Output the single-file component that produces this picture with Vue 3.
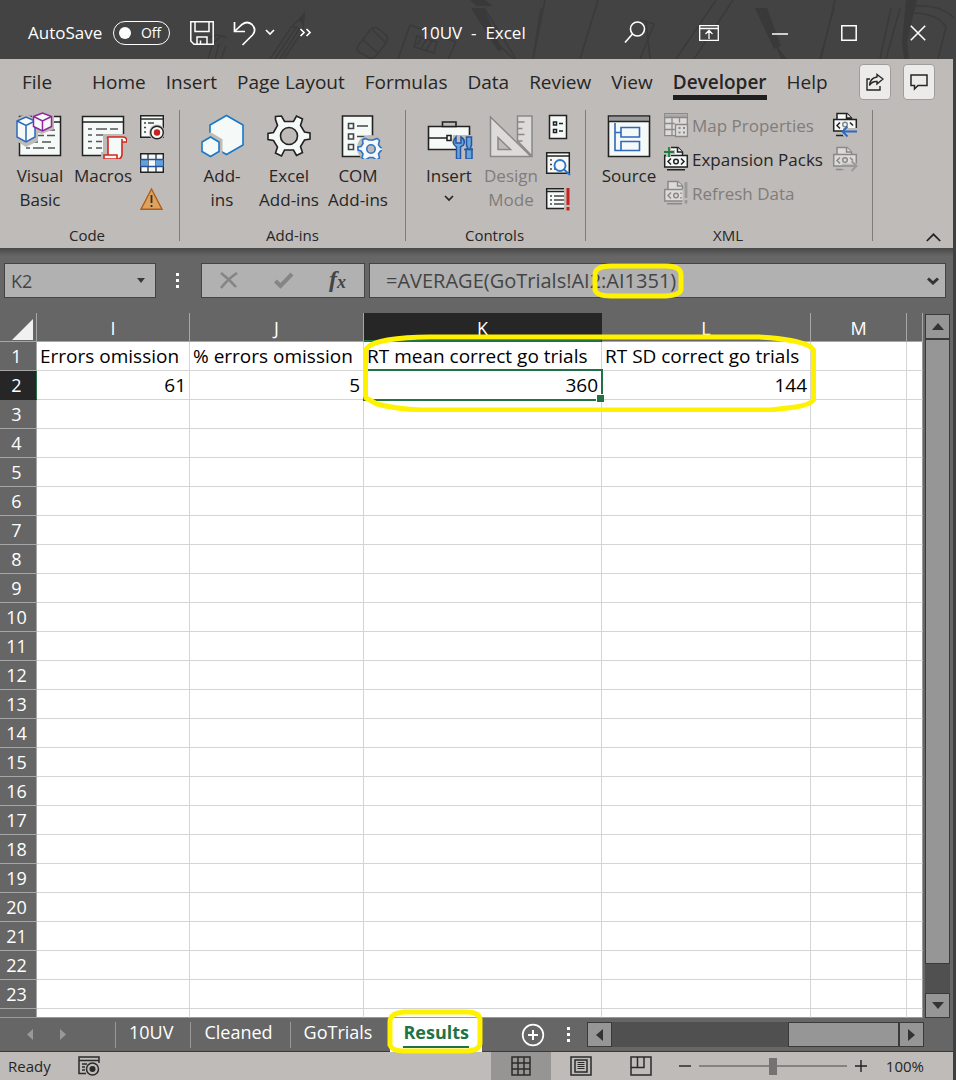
<script setup>
import { ref } from 'vue'

const autoSave = ref(false)
const nameBox = ref('K2')
const formula = ref('=AVERAGE(GoTrials!AI2:AI1351)')
const zoom = ref(50)

const menu = ['File', 'Home', 'Insert', 'Page Layout', 'Formulas', 'Data', 'Review', 'View', 'Developer', 'Help']
const columns = ['I', 'J', 'K', 'L', 'M', '']
const cells = {
  1: ['Errors omission', '% errors omission', 'RT mean correct go trials', 'RT SD correct go trials', '', ''],
  2: ['61', '5', '360', '144', '', ''],
}
const rows = Array.from({ length: 23 }, (_, i) => i + 1)
const sheets = ['10UV', 'Cleaned', 'GoTrials', 'Results']
const cellText = (row, col) => (cells[row] ? cells[row][col] : '')
</script>

<template>
  <div class="window">
    <header class="titlebar">
      <svg class="doodle" width="956" height="59" viewBox="0 0 956 59" fill="none" stroke="#3a3a3a" stroke-width="1.5" aria-hidden="true">
        <path d="M270 59 292 26 304 15 303 30 284 59M275 59l22-33M280 59l20-31M292 26l11 5M208 59l5-16 8-7 6 2M215 59l4-15M221 59l5-13M209 38q8-6 18 0" />
        <path d="M299 20l5-6-1 9z" fill="#3a3a3a" />
        <path d="M358 46l12-16q4-5 10 0l6 5q3 4 0 8l-10 13q-4 4-8 1l-9-5q-3-3-1-6zM363 40l16 14M372 29l14 14M398 59l12-34 46 17-8 17" />
        <path d="M417 36l20 6-3 11-20-6zM417 45l5-8M421 48l6-9M426 50l6-9" />
        <path d="M470 0h15l8 6h-16zM471 8h13l18 42-4 1z" fill="#393939" stroke="none" />
        <path d="M500 46l14 13M484 8l32 51M545 0l-12 59M541 8l-8 51M598 0l-18 59M716 0L676 59M733 0l-39 59M640 20l14 4-14 35M646 20l4 39M835 0l-14 59M891 8l-11 51M900 8l-14 51M911 6q30-2 43 12M912 13q25 0 34 14l-8 32M834 8l-14 51" />
        <path d="M755 8h12l14 38-7 3zM775 44l12 15h-6zM906 0h11l-10 42 2 17h-5l-2-17z" fill="#393939" stroke="none" />
      </svg>
      <label class="autosave">
        <span>AutoSave</span>
        <span class="switch"><input v-model="autoSave" type="checkbox"><span>{{ autoSave ? 'On' : 'Off' }}</span></span>
      </label>
      <button class="tbtn save" aria-label="Save">
        <svg width="24" height="24" viewBox="0 0 24 24" fill="none" stroke="#fff" stroke-width="1.5"><path d="M.8.8h22.4v22.4H4L.8 20zM5 1v9.5h14V1M7 23v-7h10v7M10.500 23v-3.500" /></svg>
      </button>
      <button class="tbtn undo" aria-label="Undo">
        <svg width="24" height="26" viewBox="0 0 24 26" fill="none" stroke="#fff" stroke-width="1.7"><path d="M1.500 2v9.500H12M2 11 9 4.500q5-4 10 0 5 5 .5 10.500L9.500 25" /></svg>
      </button>
      <button class="tbtn caret" aria-label="Undo history">
        <svg width="10" height="7" viewBox="0 0 10 7" fill="none" stroke="#fff" stroke-width="1.600"><path d="M1 1l4 4 4-4" /></svg>
      </button>
      <button class="tbtn more" aria-label="More commands">
        <svg width="13" height="9" viewBox="0 0 13 9" fill="none" stroke="#fff" stroke-width="1.700"><path d="M1.500 1 5 4.500 1.500 8M7.500 1 11 4.500 7.500 8" /></svg>
      </button>
      <h1 class="title">10UV&nbsp; -&nbsp; Excel</h1>
      <div class="wincontrols">
        <button class="tbtn" aria-label="Search">
          <svg width="22" height="24" viewBox="0 0 22 24" fill="none" stroke="#fff" stroke-width="1.600"><circle cx="13.500" cy="8" r="7" /><path d="M8.500 13 1 21.500" /></svg>
        </button>
        <button class="tbtn" aria-label="Ribbon display options">
          <svg width="20" height="16" viewBox="0 0 20 16" fill="none" stroke="#fff" stroke-width="1.300"><path d="M.7.7h18.600v14.600H.7zM.7 3.500h18.600M10 14V6M6.500 9 10 5.500 13.500 9" /></svg>
        </button>
        <button class="tbtn" aria-label="Minimize">
          <svg width="16" height="16" viewBox="0 0 16 16" stroke="#fff" stroke-width="1.500"><path d="M0 9h16" /></svg>
        </button>
        <button class="tbtn" aria-label="Maximize">
          <svg width="16" height="16" viewBox="0 0 16 16" fill="none" stroke="#fff" stroke-width="1.500"><path d="M.8.8h14.400v14.400H.8z" /></svg>
        </button>
        <button class="tbtn" aria-label="Close">
          <svg width="16" height="16" viewBox="0 0 16 16" stroke="#fff" stroke-width="1.600"><path d="M.8.8l14.400 14.400M15.200.8.8 15.200" /></svg>
        </button>
      </div>
    </header>

    <div class="body">
      <nav class="menu">
        <button v-for="m in menu" :key="m" :class="['tab', { active: m === 'Developer' }]"><span>{{ m }}</span></button>
        <span class="actions">
          <button class="action" aria-label="Share">
            <svg width="18" height="18" viewBox="0 0 18 18" fill="none" stroke="#262626" stroke-width="1.400"><path d="M4 6H1v11h13v-4" /><path d="M11 1.500 17 6l-6 5V8.500q-5-.5-7.500 4Q4 5 11 4z" /></svg>
          </button>
          <button class="action" aria-label="Comments">
            <svg width="18" height="18" viewBox="0 0 18 18" fill="none" stroke="#262626" stroke-width="1.500"><path d="M1 2h16v10.500H8L4.500 16v-3.500H1z" /></svg>
          </button>
        </span>
      </nav>

      <div class="ribbon">
        <section class="group code">
          <div class="tools">
            <button class="big w64">
              <svg width="48" height="48" viewBox="0 0 48 48" fill="none">
                <path d="M3.500 5.500h41v39h-41z" fill="#f5f9f8" stroke="#222" stroke-width="1.500" />
                <path d="M3.500 11h41" stroke="#222" stroke-width="1.500" />
                <path d="M26 19h13M20 24.500h8M31 24.500h8M10 31h4M18 31h4M26 31h9M10 37h4M17 37h11M32 37h7" stroke="#555" stroke-width="1.500" />
                <path d="M-1 8 10 3l6 3V3l10-4 12 5v14l-12 5-4-1v8l-12 6L-1 29z" fill="#bfbbb8" />
                <path d="M1 10l9-4 9 4v16l-9 5-9-5z" fill="#f5f9f8" stroke="#2f69bb" stroke-width="1.500" />
                <path d="M1 10l9 4.500 9-4.500M10 14.500V31" stroke="#2f69bb" stroke-width="1.500" />
                <path d="M17.500 5.500 26.500 2l9 3.500v10l-9 4.500-9-4.500z" fill="#f5f9f8" stroke="#9025a0" stroke-width="1.500" />
                <path d="M17.500 5.500l9 4.500 9-4.500M26.500 10v10" stroke="#9025a0" stroke-width="1.500" />
              </svg>
              <span>Visual<br>Basic</span>
            </button>
            <button class="big w62">
              <svg width="48" height="48" viewBox="0 0 48 48" fill="none">
                <path d="M3.500 5.500h41v39h-41z" fill="#f5f9f8" stroke="#222" stroke-width="1.500" />
                <path d="M3.500 11h41" stroke="#222" stroke-width="1.500" />
                <path d="M9 18h4M17 18h11M31 18h8M9 24h4M17 24h8M9 30.500h4M17 30.500h6M9 37h4M17 37h6" stroke="#555" stroke-width="1.500" />
                <path d="M24 23h26v10h-4v17H22V41h2z" fill="#bfbbb8" />
                <path d="M29 26h15q4 0 4 5h-5v13q-1 4-4 4H25v-4h4V28q-1-2 0-2zM43 31v-3M29 44h9v4" fill="#f5f9f8" stroke="#d0281f" stroke-width="1.600" />
              </svg>
              <span>Macros</span>
            </button>
            <div class="stack w36">
              <button class="small" aria-label="Record Macro">
                <svg width="26" height="26" viewBox="0 0 26 26" fill="none"><path d="M1.700 1.700h22.600v21.600H1.700z" fill="#f5f9f8" stroke="#222" stroke-width="1.400" /><path d="M1.700 5h22.600" stroke="#222" stroke-width="1.400" /><path d="M5 9h2M9 9h6M5 13.500h2M5 18h2" stroke="#444" stroke-width="1.400" /><circle cx="18" cy="18.500" r="8" fill="#bfbbb8" /><circle cx="18" cy="18.500" r="6.300" fill="#f5f9f8" stroke="#222" stroke-width="1.400" /><circle cx="18" cy="18.500" r="3.200" fill="#c9211b" /></svg>
              </button>
              <button class="small" aria-label="Use Relative References">
                <svg width="26" height="26" viewBox="0 0 26 26"><path d="M1.700 3.700h22.600v18.600H1.700z" fill="#f5f9f8" stroke="#222" stroke-width="1.400" /><path d="M9 3.700v18.600M17 3.700v18.600" stroke="#222" stroke-width="1.200" /><path d="M1.700 9.500H9v7H1.700zM17 9.500h7.300v7H17z" fill="#63a2d8" /><path d="M1 9.500h24M1 16.500h24" stroke="#2350a0" stroke-width="1.400" /></svg>
              </button>
              <button class="small" aria-label="Macro Security">
                <svg width="26" height="26" viewBox="0 0 26 26"><path d="M12.500 3 23 23.300H2z" fill="#dfa25a" stroke="#b05c18" stroke-width="1.400" /><path d="M12.500 9v8M12.500 19v2" stroke="#333" stroke-width="1.800" /></svg>
              </button>
            </div>
          </div>
          <h2>Code</h2>
        </section>

        <section class="group addins">
          <div class="tools">
            <button class="big w66">
              <svg width="48" height="48" viewBox="0 0 48 48" fill="#f5f9f8"><path d="M28.500 4.500 45 14v20l-16.500 9.500L12 34V14z" stroke="#1a78c8" stroke-width="1.600" /><path d="M12.500 23.500l10 6v11l-10 6-10-6v-11z" stroke="#bfbbb8" stroke-width="4" /><path d="M12.500 26l8.500 5v9.500l-8.500 5-8.500-5V31z" stroke="#1a78c8" stroke-width="1.600" /></svg>
              <span>Add-<br>ins</span>
            </button>
            <button class="big w68">
              <svg width="48" height="48" viewBox="0 0 48 48" fill="#f5f9f8" stroke="#222" stroke-width="1.600"><path d="M10.500 5.500 16.500 5 19.500 10.500h9L31.500 5l6 3-2 6.500 4 6.500 5.500 1v6l-5.500 1-4 6.500 2 6-6 3-3-5.500h-9L16.500 45l-6-3 2-6-4-6.500L3 28.500v-6L8.500 21.500l4-7-2-6z" /><circle cx="24" cy="25" r="8.500" fill="#bfbbb8" /></svg>
              <span>Excel<br>Add-ins</span>
            </button>
            <button class="big w70">
              <svg width="48" height="48" viewBox="0 0 48 48" fill="#f5f9f8"><path d="M8.500 5h30v40.500h-30z" stroke="#222" stroke-width="1.600" /><path d="M14.500 12.500h5v5h-5zM14.500 23h5v5h-5zM14.500 33.500h5v5h-5zM23 15h11M23 25.500h9" stroke="#444" stroke-width="1.600" /><circle cx="36" cy="37" r="13" fill="#bfbbb8" /><path d="M31 27.500l4 1.500h4l4-1.500 2.500 2-1 4 2 3 3 .5v2l-3 1-2 3 1 4-3 2-3.500-2.500h-3.500L31 49l-3-2 1-4-2-3-3-1v-3l3-.5 2-3-.5-3.500z" stroke="#2f74c8" stroke-width="1.600" /><circle cx="37" cy="38" r="4.200" fill="#bfbbb8" stroke="#2f74c8" stroke-width="1.600" /></svg>
              <span>COM<br>Add-ins</span>
            </button>
          </div>
          <h2>Add-ins</h2>
        </section>

        <section class="group controls">
          <div class="tools">
            <button class="big w62">
              <svg width="48" height="48" viewBox="0 0 48 48" fill="none"><path d="M3.500 15.500h41v23h-41z" fill="#f5f9f8" stroke="#222" stroke-width="1.600" /><path d="M17.500 11h13.500v4.500H17.500z" fill="#bfbbb8" stroke="#222" stroke-width="1.600" /><path d="M3.500 27h18M22 24.500h4v5h-4z" stroke="#222" stroke-width="1.600" /><path d="M28 24h21v25H31V37l-4-5z" fill="#bfbbb8" /><path d="M31 26v6h5v-6q5 3 2.500 8L35.500 36v12h-4V36q-6-4-.5-10z" fill="#68a5d8" stroke="#2456a5" stroke-width="1.500" /><path d="M41.500 26h5v8l-1.500 4h2v10h-6V38h2l-1.500-4zM39 38.500h9" fill="#68a5d8" stroke="#2456a5" stroke-width="1.500" /></svg>
              <span>Insert</span>
              <svg class="drop" width="10" height="7" viewBox="0 0 10 7" fill="none" stroke="#262626" stroke-width="1.700"><path d="M1 1l4 4 4-4" /></svg>
            </button>
            <button class="big w62" disabled>
              <svg width="48" height="48" viewBox="0 0 48 48" fill="#dcdbd9" stroke="#8b8987" stroke-width="1.500"><path d="M30.500 5H45v40L30.500 30z" /><path d="M30.500 11h7M30.500 17.500h5M30.500 23.500h7M30.500 30h5" /><path d="M3.500 6v39.500H44z" /><path d="M11 26.500v12h12.500z" fill="#bfbbb8" /></svg>
              <span>Design<br>Mode</span>
            </button>
            <div class="stack w32">
              <button class="small" aria-label="Properties">
                <svg width="26" height="26" viewBox="0 0 26 26" fill="#f5f9f8" stroke="#222" stroke-width="1.500"><path d="M4.500 1.500h17v23h-17z" /><path d="M8.500 8h3v3h-3zM8.500 15.500h3v3h-3zM14 9.500h4M14 17h4" /></svg>
              </button>
              <button class="small" aria-label="View Code">
                <svg width="26" height="26" viewBox="0 0 26 26" fill="none"><path d="M1.700 2.700h22.600v20.600H1.700z" fill="#f5f9f8" stroke="#222" stroke-width="1.500" /><path d="M1.700 6h22.600" stroke="#222" stroke-width="1.500" /><path d="M5 10h2M5 14.500h2M5 19h2M9 19h4" stroke="#444" stroke-width="1.500" /><circle cx="15" cy="15.500" r="5.500" fill="#f5f9f8" stroke="#2f74c8" stroke-width="1.800" /><path d="M19 19.500l6 5.500" stroke="#2f74c8" stroke-width="2" /></svg>
              </button>
              <button class="small" aria-label="Run Dialog">
                <svg width="26" height="26" viewBox="0 0 26 26" fill="none"><path d="M19 22.500H1.700V2.700H19" fill="#f5f9f8" stroke="#222" stroke-width="1.500" /><path d="M1 5.500h18" stroke="#222" stroke-width="1.500" /><path d="M5 10h2M9 10h10M5 14h2M9 14h10M5 18h2M9 18h10" stroke="#444" stroke-width="1.500" /><path d="M23 2v17M23 21v3.500" stroke="#c9211b" stroke-width="3" /></svg>
              </button>
            </div>
          </div>
          <h2>Controls</h2>
        </section>

        <section class="group xml">
          <div class="tools">
            <button class="big w64">
              <svg width="48" height="48" viewBox="0 0 48 48" fill="none"><path d="M3.500 5h41v40.500h-41z" fill="#f5f9f8" stroke="#222" stroke-width="1.600" /><path d="M4.200 6h39.600v4.500H4.200z" fill="#9a9a9a" /><path d="M3.500 10.500h41" stroke="#222" stroke-width="1.500" /><path d="M10 12v27.500h6M10 21.500h6M16 16.500h18.500v9.500H16zM16 30.500h18.500V39.500H16z" stroke="#2f69bb" stroke-width="1.600" /></svg>
              <span>Source</span>
            </button>
            <div class="list">
              <button class="line" disabled>
                <svg width="26" height="26" viewBox="0 0 26 26" fill="#dcdbd9" stroke="#8b8987" stroke-width="1.300"><path d="M1.700 1.700h22.600v22H1.700z" /><path d="M2.300 2.300h21.400v3H2.300z" fill="#aaa8a6" stroke="none" /><path d="M1.700 5.500h22.600M9 5.500v18M16.500 5.500v5M1.700 11.500h10M1.700 17.500h10" /><path d="M12.500 12.500h12v12h-12z" /><path d="M15.500 16h2M20 16h2M15.500 20.500h2M20 20.500h2" stroke-width="2.200" /></svg>
                Map Properties
              </button>
              <button class="line">
                <svg width="26" height="26" viewBox="0 0 26 26" fill="none" stroke="#222" stroke-width="1.500"><path d="M5 10V1.500h10L19.500 6v3" fill="#f5f9f8" /><path d="M14.500 1.500V6h5M1.700 9.500h22.600v11.500H1.700z" fill="#f5f9f8" /><path d="M8 12.500l-3 3 3 3M18 12.500l3 3-3 3M4 23.700h18" /><circle cx="13" cy="15.500" r="2.300" /><path d="M0 0h8v4h4v4H8v3H3V8H0z" fill="#bfbbb8" stroke="none" /><path d="M6 1v10M1 6h10" stroke="#1c8040" stroke-width="1.800" /></svg>
                Expansion Packs
              </button>
              <button class="line" disabled>
                <svg width="26" height="26" viewBox="0 0 26 26" fill="none" stroke="#8b8987" stroke-width="1.500"><path d="M5 10V1.500h10L19.500 6v3" fill="#dcdbd9" /><path d="M14.500 1.500V6h5M19.500 9.500H1.700V21h17.800" fill="#dcdbd9" /><path d="M8 12.500l-3 3 3 3M18 12.500v1.500M18 17v1.500M4 23.700h15" /><circle cx="13" cy="15.500" r="2.300" /><path d="M23 2v16M23 20v3.500" stroke="#9b9997" stroke-width="2.800" /></svg>
                Refresh Data
              </button>
            </div>
            <div class="list side">
              <button class="line" aria-label="Import">
                <svg width="26" height="26" viewBox="0 0 26 26" fill="none" stroke="#222" stroke-width="1.500"><path d="M5 10V1.500h10L19.500 6v3" fill="#f5f9f8" /><path d="M14.500 1.500V6h5M1.700 7.500h22.600v11.500H1.700z" fill="#f5f9f8" /><path d="M8 10.500l-3 3 3 3M18 10.500l3 3M4 23.500h8" /><circle cx="13" cy="12.500" r="2.300" stroke="#888" /><path d="M11 16h15v8H11z" fill="#bfbbb8" stroke="none" /><path d="M25 19.500H11M15.500 14.500l-5 5 5 5" stroke="#2f69bb" stroke-width="1.800" /></svg>
              </button>
              <button class="line" aria-label="Export" disabled>
                <svg width="26" height="26" viewBox="0 0 26 26" fill="none" stroke="#8b8987" stroke-width="1.500"><path d="M5 10V1.500h10L19.500 6v3" fill="#dcdbd9" /><path d="M14.500 1.500V6h5M1.700 8.500h22.600V20H1.700z" fill="#dcdbd9" /><path d="M8 11.500l-3 3 3 3M4 23.500h8M18 11.500l3 3" /><circle cx="13" cy="14" r="2.300" /><path d="M10 17.500h15v6H10z" fill="#bfbbb8" stroke="none" /><path d="M10 20h14M19.500 15l5 5-5 5" stroke="#9b9997" stroke-width="2" /></svg>
              </button>
            </div>
          </div>
          <h2>XML</h2>
        </section>
        <button class="collapse" aria-label="Collapse the ribbon">
          <svg width="15" height="9" viewBox="0 0 15 9" fill="none" stroke="#222" stroke-width="1.700"><path d="M.8 8 7.500 1.300 14.200 8" /></svg>
        </button>
      </div>

      <div class="formulabar">
        <div class="namebox">
          <input v-model="nameBox" aria-label="Name box">
          <button aria-label="Open name list"><svg width="8" height="5" viewBox="0 0 8 5"><path d="M0 0h8L4 5z" fill="#3a3a3a" /></svg></button>
        </div>
        <svg class="grip" width="3" height="15" viewBox="0 0 3 15" fill="#fff"><path d="M0 0h3v3H0zM0 6h3v3H0zM0 12h3v3H0z" /></svg>
        <div class="fxbox">
          <button aria-label="Cancel"><svg width="18" height="17" viewBox="0 0 18 17" stroke="#858585" stroke-width="2.600" fill="none"><path d="M1 1q8 6 15 14M17 1Q8 7 1 16" /></svg></button>
          <button aria-label="Enter"><svg width="20" height="17" viewBox="0 0 20 17" stroke="#858585" stroke-width="4" fill="none"><path d="M1.500 9l5 5L18 2" /></svg></button>
          <button class="fx" aria-label="Insert function">f<sub>x</sub></button>
        </div>
        <div class="fbox">
          <input v-model="formula" aria-label="Formula bar">
          <button aria-label="Expand formula bar"><svg width="12" height="8" viewBox="0 0 12 8" fill="none" stroke="#333" stroke-width="3"><path d="M1 1.500l5 4.500 5-4.500" /></svg></button>
          <svg class="mark formula-mark" width="94" height="38" viewBox="0 0 94 38"><path d="M4 28V13Q4 4 20 4h55q15 0 15 9v14q0 6-15 7H20Q6 34 4 28z" /></svg>
        </div>
      </div>

      <div class="workarea">
        <div class="sheet">
          <table>
            <colgroup><col class="c-row"><col class="c-i"><col class="c-j"><col class="c-k"><col class="c-l"><col class="c-m"><col></colgroup>
            <thead>
              <tr>
                <th class="corner" aria-label="Select all"><svg width="21" height="21" viewBox="0 0 21 21"><path d="M21 0v21H0z" fill="#f1f1f1" /></svg></th>
                <th v-for="(c, i) in columns" :key="i" :class="{ current: c === 'K' }">{{ c }}</th>
              </tr>
            </thead>
            <tbody>
              <tr v-for="r in rows" :key="r">
                <th :class="{ current: r === 2 }">{{ r }}</th>
                <td v-for="(c, i) in columns" :key="i" :class="{ num: r === 2, sel: r === 2 && c === 'K' }">{{ cellText(r, i) }}</td>
              </tr>
              <tr class="partial"><th></th><td v-for="(c, i) in columns" :key="i"></td></tr>
            </tbody>
          </table>
          <svg class="mark cells-mark" width="458" height="80" viewBox="0 0 458 80"><path d="M4.500 64V20q0-8 22-12 18-3 42-3h330q36 2 50 9l4 4v50q-4 5-18 7l-25 3H60q-24-1-44-6l-11-6z" /></svg>
        </div>
        <div class="vscroll">
          <button aria-label="Scroll up"><svg width="12" height="7" viewBox="0 0 12 7"><path d="M0 7 6 0l6 7z" fill="#333" /></svg></button>
          <div class="vthumb"></div>
          <div class="vtrack"></div>
          <button aria-label="Scroll down"><svg width="12" height="7" viewBox="0 0 12 7"><path d="M0 0h12L6 7z" fill="#333" /></svg></button>
        </div>
      </div>

      <div class="sheetbar">
        <div class="sheetnav">
          <button aria-label="Previous sheet"><svg width="6" height="11" viewBox="0 0 6 11"><path d="M6 0v11L0 5.500z" fill="#999" /></svg></button>
          <button aria-label="Next sheet"><svg width="6" height="11" viewBox="0 0 6 11"><path d="M0 0v11l6-5.500z" fill="#999" /></svg></button>
        </div>
        <button v-for="s in sheets" :key="s" :class="['sheettab', { active: s === 'Results' }]">
          <span>{{ s }}</span>
          <svg v-if="s === 'Results'" class="mark tab-mark" width="98" height="46" viewBox="0 0 98 46"><path d="M4 36V13q0-9 14-10h62q14 0 14 8v23q0 7-12 8H18Q6 42 4 36z" /></svg>
        </button>
        <button class="addsheet" aria-label="New sheet"><svg width="24" height="24" viewBox="0 0 24 24" fill="none" stroke="#fff" stroke-width="1.700"><circle cx="12" cy="12" r="10.300" /><path d="M12 7v10M7 12h10" stroke-width="2" /></svg></button>
        <svg class="grip" width="3" height="15" viewBox="0 0 3 15" fill="#fff"><path d="M0 0h3v3H0zM0 6h3v3H0zM0 12h3v3H0z" /></svg>
        <div class="hscroll">
          <button aria-label="Scroll left"><svg width="7" height="12" viewBox="0 0 7 12"><path d="M7 0v12L0 6z" fill="#333" /></svg></button>
          <div class="htrack"></div>
          <div class="hthumb"></div>
          <button aria-label="Scroll right"><svg width="7" height="12" viewBox="0 0 7 12"><path d="M0 0v12l7-6z" fill="#333" /></svg></button>
        </div>
      </div>

      <footer class="status">
        <span class="ready">Ready</span>
        <button class="rec" aria-label="Record macro">
          <svg width="22" height="20" viewBox="0 0 22 20" fill="none" stroke="#2b2b2b" stroke-width="1.500"><path d="M8 17.500H1V1h20v6M1 4.500h20" /><path d="M4 8h5M4 11h3M4 14h3" /><circle cx="14.500" cy="13" r="6" /><circle cx="14.500" cy="13" r="2.300" fill="#2b2b2b" /></svg>
        </button>
        <div class="views">
          <button class="view on" aria-label="Normal view"><svg width="20" height="20" viewBox="0 0 20 20" fill="none" stroke="#2b2b2b" stroke-width="1.500"><path d="M1 1h18v18H1zM7 1v18M13 1v18M1 7h18M1 13h18" /></svg></button>
          <button class="view" aria-label="Page layout view"><svg width="22" height="20" viewBox="0 0 22 20" fill="none" stroke="#2b2b2b" stroke-width="1.500"><path d="M1 1h20v18H1zM5 4h12v12H5z" /><path d="M7.500 6.500h7M7.500 8.500h7M7.500 10.500h7M7.500 12.500h7" stroke-width="1" /></svg></button>
          <button class="view" aria-label="Page break preview"><svg width="22" height="20" viewBox="0 0 22 20" fill="none" stroke="#2b2b2b" stroke-width="1.500"><path d="M1 1h20v18H1zM1 11.500h13V1M7.500 1v10.500" /></svg></button>
        </div>
        <button class="zbtn" aria-label="Zoom out"><svg width="12" height="12" viewBox="0 0 12 12" stroke="#222" stroke-width="1.400"><path d="M0 6h12" /></svg></button>
        <input v-model="zoom" class="zoom" type="range" min="0" max="100" aria-label="Zoom">
        <button class="zbtn" aria-label="Zoom in"><svg width="12" height="12" viewBox="0 0 12 12" stroke="#222" stroke-width="1.400"><path d="M0 6h12M6 0v12" /></svg></button>
        <span class="percent">100%</span>
      </footer>
    </div>
  </div>
</template>

<style>
body { margin: 0; background: #666; }
</style>

<style scoped>
* { box-sizing: border-box; }
.window { font-family: "Open Sans", "Noto Sans", sans-serif; color: #262626; background: #3f3f3f; overflow: hidden; }
button, input { font: inherit; color: inherit; background: none; border: 0; padding: 0; margin: 0; border-radius: 0; }
svg { display: block; flex: none; }
.body { margin-right: 3px; background: #666; }

.titlebar { position: relative; display: flex; align-items: center; height: 59px; padding: 6px 30px 0 28px; background: #434343; color: #fff; font-size: 17px; }
.doodle { position: absolute; left: 0; top: 0; }
.titlebar > :not(.doodle) { position: relative; }
.autosave { display: flex; align-items: center; gap: 11px; }
.switch { display: flex; align-items: center; justify-content: space-between; width: 57px; height: 24px; padding: 0 8px 0 5px; border: 1px solid #fff; border-radius: 12px; font-size: 14px; }
.switch input { appearance: none; width: 12px; height: 12px; border-radius: 6px; background: #fff; }
.save { margin-left: 20px; }
.undo { margin-left: 19px; }
.caret { margin-left: 8px; }
.more { margin-left: 24px; }
.title { margin: 0 0 0 108px; font-size: 17px; font-weight: 400; white-space: nowrap; }
.wincontrols { display: flex; align-items: center; margin-left: auto; gap: 53px; }

.menu { display: flex; align-items: center; height: 46px; padding-left: 22px; background: #bfbbb8; font-size: 19px; }
.tab { height: 46px; padding: 0 10px; white-space: nowrap; }
.tab:first-child { padding: 0 30px 0 0; }
.tab span { display: block; height: 36px; padding-top: 5px; line-height: 26px; border-bottom: 5px solid transparent; }
.tab.active { font-weight: 600; }
.tab.active span { border-color: #1f1f1f; }
.actions { display: flex; gap: 12px; margin: 0 18px 0 auto; }
.action { display: grid; place-items: center; width: 32px; height: 36px; border: 1px solid #9f9d9b; border-radius: 4px; background: #edebe9; }

.ribbon { display: flex; height: 143px; background: #bfbbb8; font-size: 17px; }
.group { position: relative; display: flex; flex-direction: column; flex: none; justify-content: space-between; }
.group::after { content: ""; position: absolute; right: 0; top: 5px; bottom: 7px; width: 1px; background: #7f7c7a; }
.group h2 { margin: 0 0 2px; text-align: center; font-size: 15px; line-height: 22px; font-weight: 400; }
.code { width: 180px; padding-left: 8px; }
.code h2 { padding-right: 14px; }
.addins { width: 226px; padding-left: 9px; }
.addins h2 { padding-right: 10px; }
.controls { width: 180px; padding-left: 12px; }
.controls h2 { padding-right: 15px; }
.xml { width: 287px; padding-left: 11px; }
.xml h2 { padding-right: 14px; }
.tools { display: flex; align-items: flex-start; }
.big { display: flex; flex-direction: column; align-items: center; padding-top: 6px; line-height: 24px; text-align: center; white-space: nowrap; }
.big span { margin-top: 5px; }
button:disabled { color: #7f7d7b; }
.drop { margin-top: 7px; }
.w32 { width: 32px; } .w36 { width: 36px; } .w62 { width: 62px; } .w64 { width: 64px; } .w66 { width: 66px; } .w68 { width: 68px; } .w70 { width: 70px; }
.stack { display: flex; flex-direction: column; align-items: center; gap: 10px; padding-top: 9px; }
.list { display: flex; flex-direction: column; gap: 8px; padding: 7px 0 0 2px; }
.line { display: flex; align-items: center; gap: 3px; height: 26px; white-space: nowrap; }
.side { margin-left: auto; padding-right: 15px; }
.collapse { align-self: flex-end; margin: 0 12px 6px auto; }

.formulabar { display: flex; align-items: center; height: 65px; padding: 0 7px 0 4px; background: linear-gradient(#484848, #666 8px); color: #444; font-size: 20px; }
.namebox, .fxbox, .fbox { display: flex; align-items: center; height: 35px; border: 1px solid #444; background: #b1b1b1; }
.namebox { width: 152px; padding: 0 10px 0 6px; font-size: 18px; }
.namebox input { flex: 1; min-width: 0; }
.formulabar .grip { margin: 0 22px 0 20px; }
.fxbox { width: 164px; justify-content: space-between; padding: 0 18px; }
.fx { padding-bottom: 4px; font-family: "Liberation Serif", serif; font-style: italic; font-weight: 700; font-size: 24px; line-height: 24px; color: #444; }
.fx sub { font-size: 18px; line-height: 1px; vertical-align: -1px; }
.fbox { position: relative; flex: 1; margin-left: 4px; padding: 0 6px 0 16px; }
.fbox input { flex: 1; min-width: 0; }
.mark { position: absolute; fill: none; stroke: #fff200; stroke-width: 5; stroke-linejoin: round; pointer-events: none; }
.formula-mark { left: 221px; top: -2px; }

.workarea { display: flex; }
.sheet { position: relative; flex: 1; min-width: 0; }
table { width: 100%; table-layout: fixed; border-collapse: separate; border-spacing: 0; background: #fff; font-size: 19px; color: #000; }
.c-row { width: 37px; } .c-i { width: 153px; } .c-j { width: 174px; } .c-k { width: 238px; } .c-l { width: 209px; } .c-m { width: 96px; }
th, td { height: 29px; padding: 0; line-height: 28px; white-space: nowrap; border-right: 1px solid #d4d4d4; border-bottom: 1px solid #d4d4d4; }
th { background: #666; color: #fff; font-size: 18px; font-weight: 400; border-color: #a6a6a6; }
thead th { padding-top: 2px; line-height: 26px; }
tbody th { padding-right: 3px; }
td { padding: 0 3px; }
td:last-child { border-right-color: #999; }
.num { text-align: right; }
.corner svg { margin: 2px 3px 0 auto; }
th.current { background: #262626; border-color: #262626; }
thead th.current { box-shadow: inset 0 -1px #217346; border-bottom-color: #217346; }
tbody th.current { border-right-color: #217346; }
.partial th, .partial td { height: 9px; line-height: 1px; border-bottom-color: #999; }
.sel { position: relative; }
.sel::before { content: ""; position: absolute; inset: -2px -2px -2px -1px; border: 2px solid #217346; }
.sel::after { content: ""; position: absolute; right: -3px; bottom: -3px; width: 7px; height: 7px; background: #217346; border: solid #fff; border-width: 1px 0 0 1px; }
.cells-mark { left: 361px; top: 19px; }

.vscroll { display: flex; flex-direction: column; width: 25px; margin: 1px 3px 0 2px; background: #505050; }
.vscroll button, .hscroll button { display: grid; place-items: center; flex: none; width: 25px; height: 25px; border: 1px solid #3a3a3a; background: #969696; }
.vthumb { flex: 627; border: 1px solid #3a3a3a; background: #969696; }
.vtrack { flex: 29; }

.sheetbar { display: flex; align-items: center; height: 34px; padding-right: 29px; border-bottom: 1px solid #3a3a3a; color: #fff; font-size: 18px; }
.sheetnav { display: flex; gap: 27px; width: 115px; padding-left: 27px; }
.sheettab { position: relative; height: 26px; padding: 0 17px 5px 13px; border-left: 1px solid #999; line-height: 21px; }
.sheettab.active { height: 34px; margin-left: 1px; padding: 0 13px 2px; border: 0; background: #fff; color: #217346; font-weight: 700; }
.sheettab.active span { display: block; height: 29px; line-height: 26px; border-bottom: 2px solid #217346; }
.tab-mark { left: -4px; top: -9px; }
.addsheet { margin-left: 39px; }
.sheetbar .grip { margin: 0 17px 0 22px; }
.hscroll { display: flex; flex: 1; height: 25px; background: #505050; }
.htrack { flex: 178; }
.hthumb { flex: 110; border: 1px solid #3a3a3a; background: #969696; }

.status { display: flex; align-items: center; height: 28px; padding: 0 29px 0 8px; background: #bfbbb8; font-size: 15px; }
.rec { margin-left: 27px; }
.views { display: flex; height: 28px; margin-left: auto; }
.view { display: grid; place-items: center; width: 60px; height: 28px; }
.view.on { background: #979593; }
.zbtn { margin-left: 8px; }
.zoom { appearance: none; width: 148px; height: 18px; margin: 0 0 0 8px; background: linear-gradient(#858381, #858381) center / 100% 2px no-repeat; }
.zoom::-webkit-slider-thumb { appearance: none; width: 8px; height: 17px; background: #757371; }
.percent { margin-left: 19px; }
</style>
